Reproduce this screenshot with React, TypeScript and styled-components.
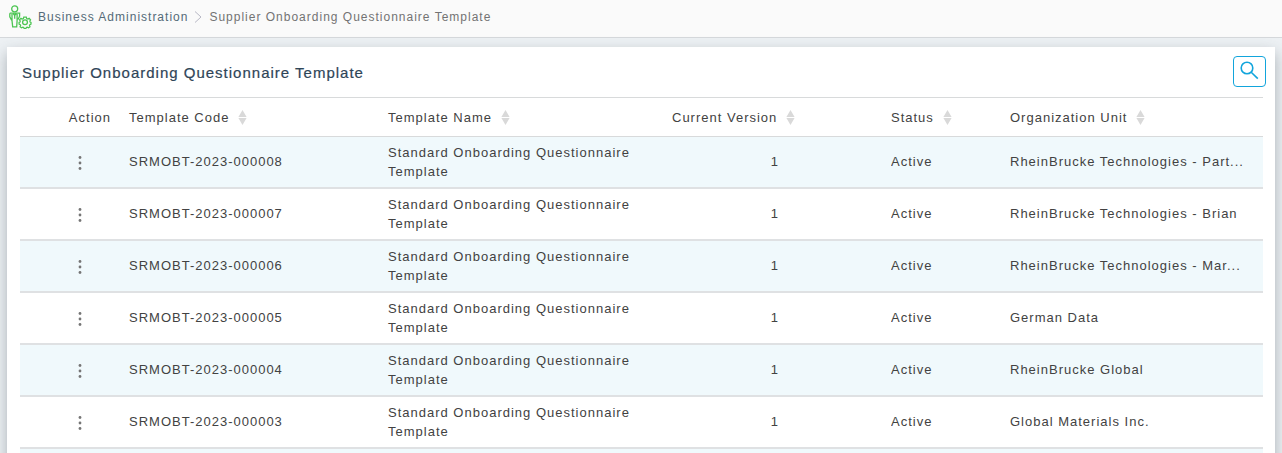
import React from "react";
import styled, { createGlobalStyle } from "styled-components";

const GlobalStyle = createGlobalStyle`
  * { box-sizing: border-box; }
  body {
    margin: 0;
    background: #edf1f4;
    color: #424242;
    font: 13px/19px "Liberation Sans", Arial, sans-serif;
    letter-spacing: 1px;
  }
`;

const Page = styled.div`
  display: flex;
  flex-direction: column;
  height: 100vh;
  overflow: hidden;
`;

const TopBar = styled.nav`
  display: flex;
  align-items: center;
  flex: none;
  height: 38px;
  padding: 0 8px 3px;
  background: #fafafa;
  border-bottom: 1px solid #d5d8db;
  font-size: 12px;
`;

const Crumb = styled.a`
  color: #546a78;
  text-decoration: none;
`;

const CurrentCrumb = styled.span`
  color: #737373;
`;

const AdminIcon = styled.svg`
  width: 24px;
  height: 24px;
  margin-right: 6px;
`;

const Chevron = styled.svg`
  width: 8px;
  height: 12px;
  margin: 0 7px 0 6px;
`;

const Card = styled.main`
  flex: 1 0 auto;
  margin: 9px 7px 0;
  padding: 0 12px 0 13px;
  background: #fff;
  box-shadow: 0 6px 14px rgba(60, 72, 82, 0.38);
`;

const CardHeader = styled.header`
  display: flex;
  align-items: center;
  justify-content: space-between;
  height: 50px;
  padding: 0 0 2px 2px;
`;

const Title = styled.h1`
  margin: 0;
  padding-top: 2px;
  color: #2f4558;
  font-size: 15px;
  font-weight: 400;
  -webkit-text-stroke: 0.2px;
`;

const SearchButton = styled.button`
  display: flex;
  align-items: center;
  justify-content: center;
  width: 33px;
  height: 31px;
  margin-right: -3px;
  padding: 0 0 2px;
  background: #fff;
  border: 1px solid #12a5dc;
  border-radius: 4px;
  color: #12a5dc;
`;

const Table = styled.table`
  width: 100%;
  border-collapse: separate;
  border-spacing: 0;
  table-layout: fixed;
`;

const Col = styled.col<{ $width: number }>`
  width: ${(p) => p.$width}px;
`;

const HeadCell = styled.th<{ $align: string }>`
  height: 40px;
  padding: 0 ${(p) => (p.$align === "right" ? "10px" : "8px")} 0 8px;
  border-top: 1px solid #d8dadb;
  border-bottom: 1px solid #d8dadb;
  font-weight: 400;
  text-align: ${(p) => p.$align};
  white-space: nowrap;
`;

const SortButton = styled.button`
  display: inline-flex;
  align-items: center;
  gap: 9px;
  padding: 0;
  background: none;
  border: 0;
  color: inherit;
  font: inherit;
  letter-spacing: inherit;
`;

const Row = styled.tr`
  height: 52px;
  &:nth-child(odd) { background: #f0f9fc; }
`;

const Cell = styled.td<{ $kind?: "number" | "action" }>`
  padding: 0 ${(p) => (p.$kind === "number" ? "104px" : "8px")} 0 8px;
  border-bottom: 2px solid #dfe1e3;
  text-align: ${(p) => (p.$kind === "number" ? "right" : "left")};
  ${(p) => p.$kind === "action" && "padding-left: 56px;"}
`;

const OneLine = styled.span`
  display: block;
  padding-bottom: 2px;
  overflow: hidden;
  text-overflow: ellipsis;
  white-space: nowrap;
`;

const MenuButton = styled.button`
  display: flex;
  padding: 2px 0 0;
  background: none;
  border: 0;
  color: #757575;
`;

const columns = [
  { label: "Action", width: 101 },
  { label: "Template Code", width: 259, sortable: true },
  { label: "Template Name", width: 284, sortable: true },
  { label: "Current Version", width: 219, sortable: true },
  { label: "Status", width: 119, sortable: true },
  { label: "Organization Unit", width: 261, sortable: true },
];

const templates = [
  { code: "SRMOBT-2023-000008", unit: "RheinBrucke Technologies - Part..." },
  { code: "SRMOBT-2023-000007", unit: "RheinBrucke Technologies - Brian" },
  { code: "SRMOBT-2023-000006", unit: "RheinBrucke Technologies - Mar..." },
  { code: "SRMOBT-2023-000005", unit: "German Data" },
  { code: "SRMOBT-2023-000004", unit: "RheinBrucke Global" },
  { code: "SRMOBT-2023-000003", unit: "Global Materials Inc." },
];

const SortIcon = () => (
  <svg width="9" height="15" viewBox="0 0 9 15" fill="#d9d9d9" aria-hidden="true">
    <path d="M4.5 0 8.6 7H.4zM.4 8h8.2l-4.1 7z" />
  </svg>
);

export default function App() {
  return (
    <>
      <GlobalStyle />
      <Page>
        <TopBar aria-label="Breadcrumb">
          <AdminIcon viewBox="0 0 24 24" fill="none" stroke="#4cc552" strokeWidth="1.3" aria-hidden="true">
            <circle cx="6.7" cy="3.8" r="3" />
            <path d="M1.8 8.2h9.8v3l-1.6 3.3M1.8 8.2v3.6l1.8 3.4M4 9v6.5l.7 6.4h4l.4-6.4V9M5.2 8.5l1.5 2 1.5-2M6.7 10.5v3.3" />
            <path d="m15.6 11.9h2.8l.4 1.7 1.2.5 1.5-.9 1.5 1.7-.8 1.4.3 1.1 1 .4v1.7l-1.3.6-.4 1 .6 1.3-1.6 1.2-1.4-.7-1 .4-.4 1.1h-2l-.4-1.1-1-.4-1.4.7-1.6-1.2.6-1.3-.4-1-1.3-.6v-1.7l1-.4.3-1.1-.8-1.4 1.5-1.7 1.5.9 1.2-.5z" transform="translate(1.4 1.1) scale(.92)" />
            <circle cx="17" cy="17.2" r="2.4" />
          </AdminIcon>
          <Crumb href="#">Business Administration</Crumb>
          <Chevron viewBox="0 0 8 12" fill="none" stroke="#b8b8c4" aria-hidden="true">
            <path d="m1 .5 6 5.5-6 5.5" />
          </Chevron>
          <CurrentCrumb aria-current="page">Supplier Onboarding Questionnaire Template</CurrentCrumb>
        </TopBar>
        <Card>
          <CardHeader>
            <Title>Supplier Onboarding Questionnaire Template</Title>
            <SearchButton aria-label="Search">
              <svg width="19" height="19" viewBox="0 0 19 19" fill="none" stroke="currentColor" strokeWidth="1.6">
                <circle cx="7" cy="7" r="5.8" />
                <path d="m11.2 11.2 6.6 6.4" />
              </svg>
            </SearchButton>
          </CardHeader>
          <Table>
            <colgroup>
              {columns.map((c) => <Col key={c.label} $width={c.width} />)}
            </colgroup>
            <thead>
              <tr>
                {columns.map((c) => (
                  <HeadCell key={c.label} scope="col" $align={c.sortable ? "left" : "right"}>
                    {c.sortable ? <SortButton>{c.label}<SortIcon /></SortButton> : c.label}
                  </HeadCell>
                ))}
              </tr>
            </thead>
            <tbody>
              {templates.map((t) => (
                <Row key={t.code}>
                  <Cell $kind="action">
                    <MenuButton aria-label={`Actions for ${t.code}`}>
                      <svg width="8" height="14" viewBox="0 0 8 14" fill="currentColor">
                        <circle cx="4" cy="1.5" r="1.4" />
                        <circle cx="4" cy="7" r="1.4" />
                        <circle cx="4" cy="12.5" r="1.4" />
                      </svg>
                    </MenuButton>
                  </Cell>
                  <Cell><OneLine>{t.code}</OneLine></Cell>
                  <Cell>Standard Onboarding Questionnaire Template</Cell>
                  <Cell $kind="number"><OneLine>1</OneLine></Cell>
                  <Cell><OneLine>Active</OneLine></Cell>
                  <Cell><OneLine>{t.unit}</OneLine></Cell>
                </Row>
              ))}
              <Row><Cell colSpan={6} /></Row>
            </tbody>
          </Table>
        </Card>
      </Page>
    </>
  );
}
